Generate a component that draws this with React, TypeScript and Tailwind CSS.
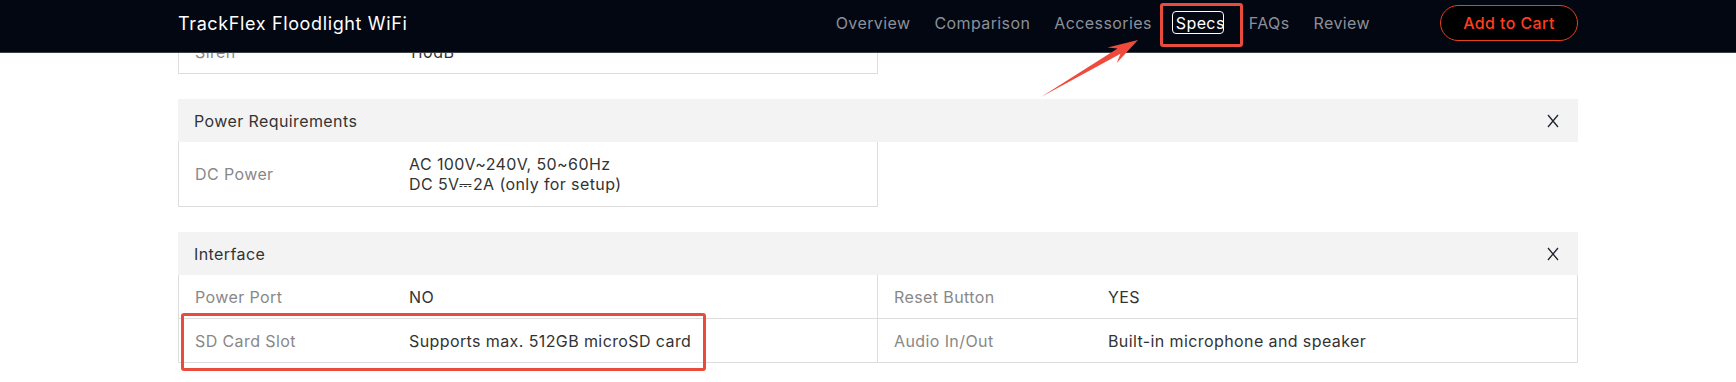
const FONT = { fontFamily: "Inter, 'Noto Sans', Arial, sans-serif" };

const navItems = ["Overview", "Comparison", "Accessories", "Specs", "FAQs", "Review"];

function CloseIcon() {
  return (
    <svg width="12" height="14" viewBox="0 0 12 14" className="text-[#1f2430]" aria-hidden>
      <path d="M1 1 L11 13 M11 1 L1 13" stroke="currentColor" strokeWidth="1.3" fill="none" />
    </svg>
  );
}

function SectionHead({ title }: { title: string }) {
  return (
    <div className="flex h-[43px] w-full items-center justify-between bg-[#f3f3f3] pl-4 pr-[19px] text-[#333]">
      <span>{title}</span>
      <CloseIcon />
    </div>
  );
}

function Cell({ label, children, tall }: { label: string; children: React.ReactNode; tall?: boolean }) {
  return (
    <div className={`flex items-center ${tall ? "h-[64px]" : "h-[43px]"}`}>
      <span className="w-[230px] shrink-0 pl-4 text-[#888]">{label}</span>
      <div className="leading-[20px] text-[#333]">{children}</div>
    </div>
  );
}

export default function App() {
  return (
    <div
      className="relative h-[382px] w-[1736px] overflow-hidden bg-white text-base tracking-[0.025em]"
      style={FONT}
    >
      {/* content */}
      <div className="ml-[178px] flex w-[1400px] flex-col pt-[29px]">
        <div className="w-[700px] border border-[#ddd]">
          <Cell label="Siren">110dB</Cell>
        </div>

        <div className="mt-[25px]">
          <SectionHead title="Power Requirements" />
          <div className="w-[700px] border border-t-0 border-[#ddd]">
            <Cell label="DC Power" tall>
              <p>AC 100V~240V, 50~60Hz</p>
              <p>DC 5V⎓2A (only for setup)</p>
            </Cell>
          </div>
        </div>

        <div className="mt-[25px]">
          <SectionHead title="Interface" />
          <div className="grid grid-cols-2 border border-t-0 border-[#ddd]">
            <div className="border-r border-b border-[#ddd]">
              <Cell label="Power Port">NO</Cell>
            </div>
            <div className="border-b border-[#ddd]">
              <Cell label="Reset Button">YES</Cell>
            </div>
            <div className="border-r border-[#ddd]">
              <Cell label="SD Card Slot">Supports max. 512GB microSD card</Cell>
            </div>
            <div>
              <Cell label="Audio In/Out">Built-in microphone and speaker</Cell>
            </div>
          </div>
        </div>
      </div>

      {/* sticky header over the content */}
      <header className="absolute left-0 top-0 h-[53px] w-full border-b border-[#3b3f47] bg-[#020712]">
        <div className="ml-[178px] flex h-[46px] w-[1400px] items-center justify-between">
          <span className="text-[18px] tracking-[0.035em] text-white">TrackFlex Floodlight WiFi</span>
          <div className="flex items-center">
            <nav className="flex items-center gap-[24px] text-[#8c9099]">
              {navItems.map((item) => (
                <span key={item} className={item === "Specs" ? "text-white" : ""}>
                  {item}
                </span>
              ))}
            </nav>
            <button
              type="button"
              className="ml-[70px] flex h-[36px] w-[138px] items-center justify-center rounded-full border border-[#e8401c] bg-black font-medium text-[#ff3d1f]"
            >
              Add to Cart
            </button>
          </div>
        </div>
      </header>

      {/* annotations */}
      <div className="absolute left-[1172px] top-[11px] h-[23px] w-[52px] rounded-[4px] border border-white" />
      <div className="absolute left-[1160px] top-[3px] h-[44px] w-[83px] rounded-[3px] border-[3px] border-[#e94b3c]" />
      <div className="absolute left-[181px] top-[313px] h-[58px] w-[525px] rounded-[3px] border-[3px] border-[#e94b3c]" />
      <svg className="pointer-events-none absolute left-0 top-0" width="1736" height="382" viewBox="0 0 1736 382">
        <polygon
          points="1041,97 1120.5,53.8 1116.7,63 1138,40 1107.5,47.4 1117.5,48.6"
          fill="#ef4a3c"
        />
      </svg>
    </div>
  );
}
